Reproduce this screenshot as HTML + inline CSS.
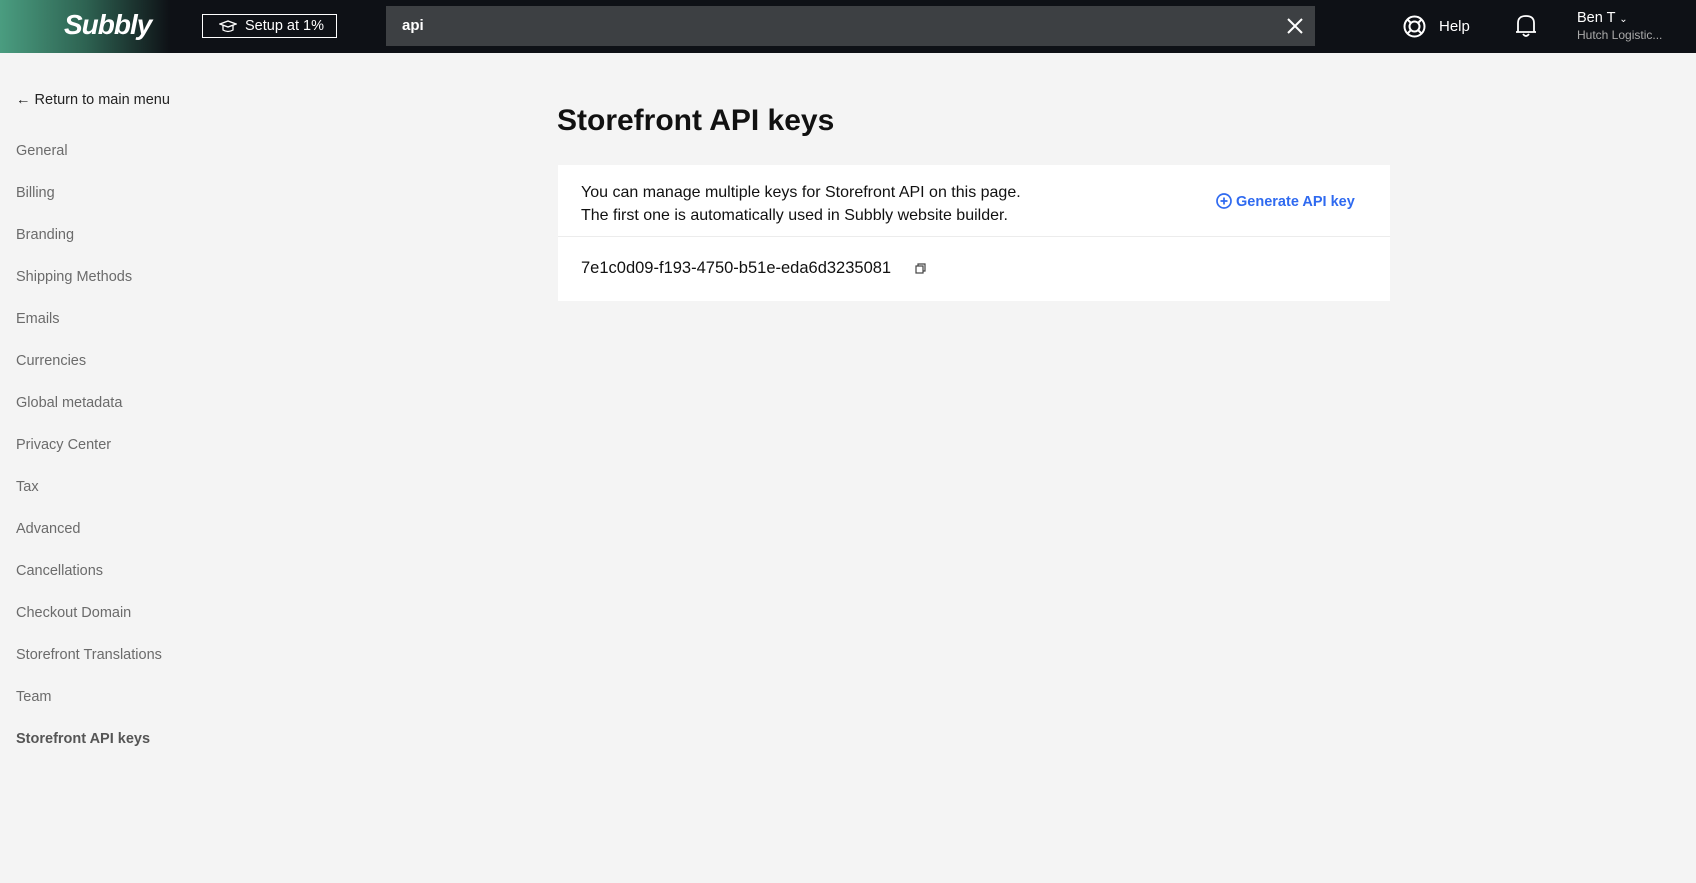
<!DOCTYPE html><html><head><style>
body{margin:0;width:1696px;height:883px;background:#f4f4f4;font-family:"Liberation Sans",sans-serif;overflow:hidden;position:relative;color:#111}
.hdr{position:absolute;left:0;top:0;width:1696px;height:53px;background:#0e1116}
.grad{position:absolute;left:0;top:0;width:170px;height:53px;background:linear-gradient(90deg,#4a9d80,#2e6352 50%,#0e1116)}
.a{position:absolute;white-space:nowrap}
.side{position:absolute;left:16px;font-size:14.5px;color:#6b6b6b}
</style></head><body>
<div class="hdr"><div class="grad"></div>
<div class="a" style="left:64px;top:9px;font-size:28px;font-style:italic;font-weight:bold;color:#fff;font-family:'Liberation Sans',sans-serif;letter-spacing:-1px">Subbly</div>
<div class="a" style="left:202px;top:14px;width:133px;height:22px;border:1px solid #fff;color:#fff;font-size:14.5px;line-height:22px">
<svg style="position:absolute;left:16px;top:5px" width="18" height="13" viewBox="0 0 18 13" fill="none" stroke="#fff" stroke-width="1.3"><path d="M1 4L9 1L17 4L9 7Z"/><path d="M4 5.5V10Q9 13 14 10V5.5"/></svg>
<span style="position:absolute;left:42px">Setup at 1%</span></div>
<div class="a" style="left:386px;top:6px;width:929px;height:40px;background:#3d4043">
<span class="a" style="left:16px;top:11px;color:#fff;font-weight:bold;font-size:15px">api</span>
<svg style="position:absolute;right:12px;top:12px" width="16" height="16" stroke="#fff" stroke-width="2"><path d="M1 1L15 15M15 1L1 15"/></svg></div>
<svg style="position:absolute;left:1403px;top:15px" width="23" height="23" viewBox="0 0 23 23" fill="none" stroke="#fff" stroke-width="2"><circle cx="11.5" cy="11.5" r="10"/><circle cx="11.5" cy="11.5" r="5"/><path d="M4.5 4.5L8 8M18.5 4.5L15 8M4.5 18.5L8 15M18.5 18.5L15 15"/></svg>
<div class="a" style="left:1439px;top:18px;color:#fff;font-size:15px">Help</div>
<svg style="position:absolute;left:1514px;top:13px" width="24" height="26" viewBox="0 0 24 26" fill="none" stroke="#fff" stroke-width="1.8"><path d="M4 19V10Q4 3 12 3Q20 3 20 10V19H22H2Z"/><path d="M9 21Q12 25 15 21"/></svg>
<div class="a" style="left:1577px;top:10px;color:#fff;font-size:14.5px">Ben T <span style="font-size:10px">&#8964;</span></div>
<div class="a" style="left:1577px;top:28px;color:#aaa;font-size:12px">Hutch Logistic...</div>
</div>
<div class="a" style="left:16px;top:92px;font-size:14.5px;color:#222">&larr; Return to main menu</div>
<div class="side" style="top:143px">General</div>
<div class="side" style="top:185px">Billing</div>
<div class="side" style="top:227px">Branding</div>
<div class="side" style="top:269px">Shipping Methods</div>
<div class="side" style="top:311px">Emails</div>
<div class="side" style="top:353px">Currencies</div>
<div class="side" style="top:395px">Global metadata</div>
<div class="side" style="top:437px">Privacy Center</div>
<div class="side" style="top:479px">Tax</div>
<div class="side" style="top:521px">Advanced</div>
<div class="side" style="top:563px">Cancellations</div>
<div class="side" style="top:605px">Checkout Domain</div>
<div class="side" style="top:647px">Storefront Translations</div>
<div class="side" style="top:689px">Team</div>
<div class="side" style="top:731px;font-weight:bold;color:#555">Storefront API keys</div>
<div class="a" style="left:557px;top:104px;font-size:30px;font-weight:bold;color:#111">Storefront API keys</div>
<div class="a" style="left:558px;top:165px;width:832px;height:136px;background:#fff">
<div class="a" style="left:23px;top:16px;font-size:16px;line-height:23px;color:#111">You can manage multiple keys for Storefront API on this page.<br>The first one is automatically used in Subbly website builder.</div>
<div class="a" style="left:658px;top:28px;font-size:14.5px;font-weight:bold;color:#2f6af0"><svg style="vertical-align:-3px" width="16" height="16" fill="none" stroke="#2f6af0" stroke-width="1.7"><circle cx="8" cy="8" r="7"/><path d="M8 4.5V11.5M4.5 8H11.5"/></svg> Generate API key</div>
<div class="a" style="left:0;top:71px;width:832px;height:1px;background:#ececec"></div>
<div class="a" style="left:23px;top:94px;font-size:16.5px;color:#111">7e1c0d09-f193-4750-b51e-eda6d3235081</div>
<svg style="position:absolute;left:357px;top:98px" width="11" height="11" fill="none" stroke="#444" stroke-width="1.2"><rect x="1" y="3" width="7" height="7"/><path d="M3 3V1H10V8H8"/></svg>
</div>
</body></html>
